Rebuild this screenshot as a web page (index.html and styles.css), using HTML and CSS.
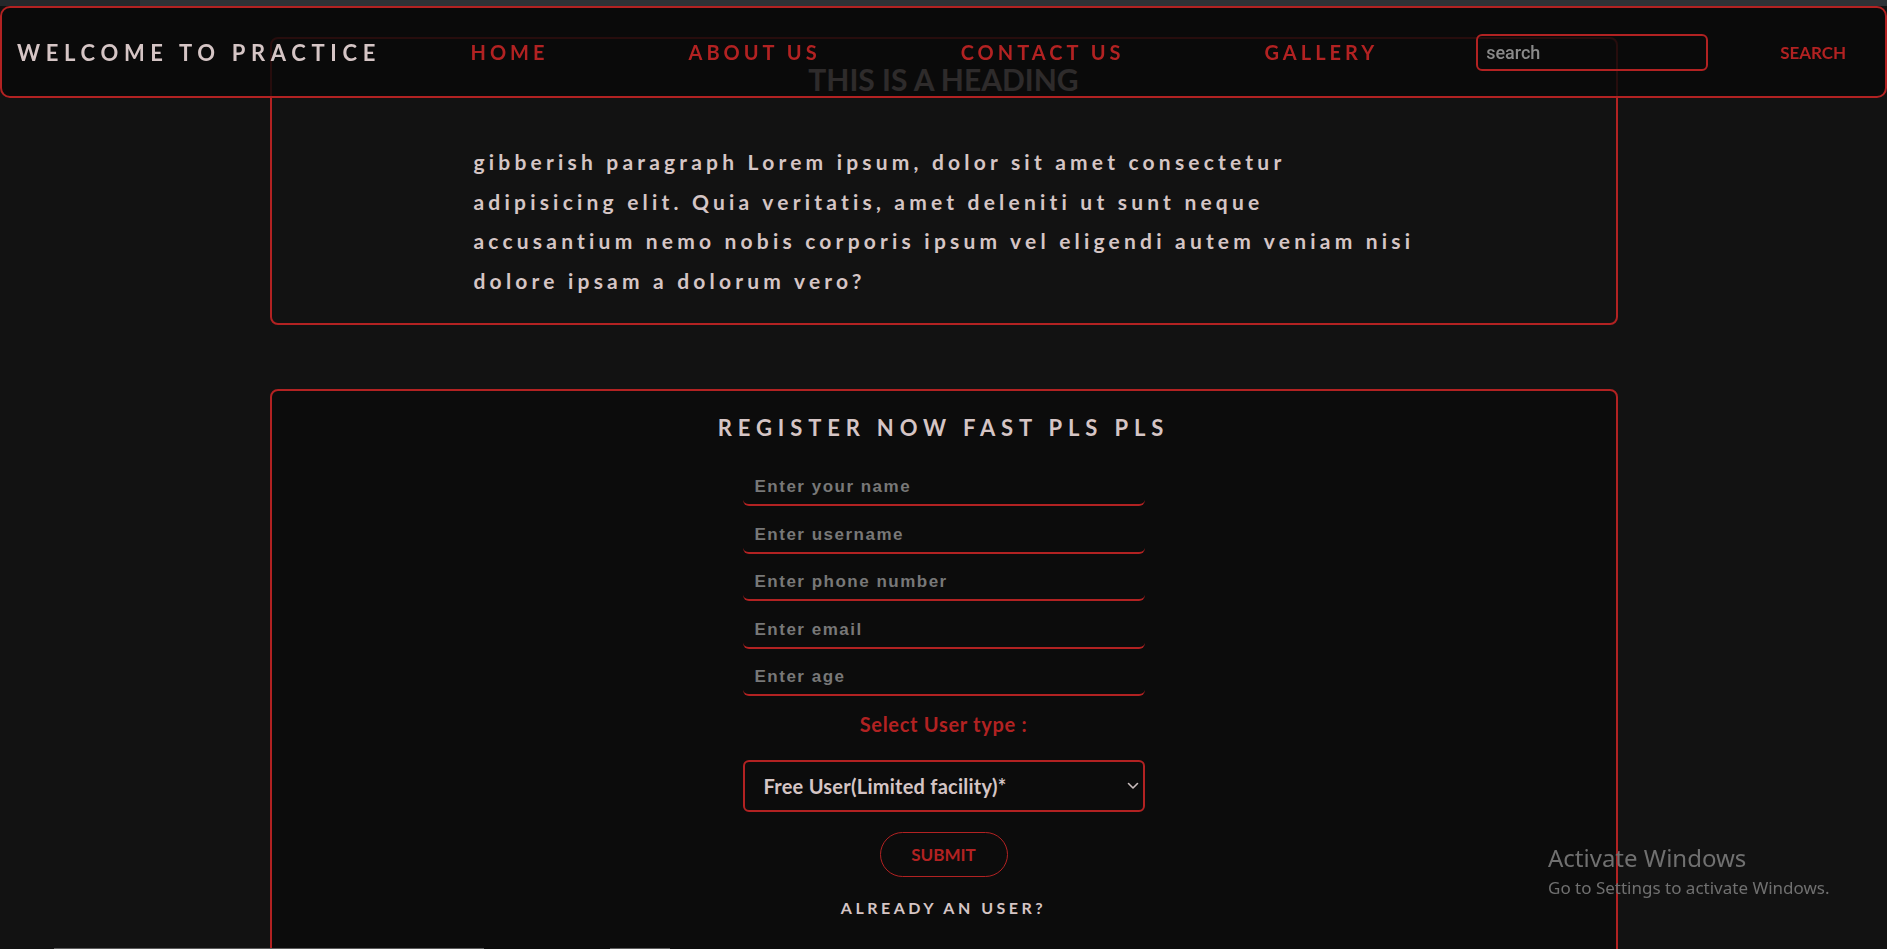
FILE: index.html
```html
<!DOCTYPE html>
<html lang="en">
<head>
<meta charset="utf-8">
<title>Welcome to practice</title>
<link rel="stylesheet" href="styles.css">
</head>
<body>
<div class="topstrip"><span class="topstrip-left"></span></div>

<header class="navbar">
  <h1 class="brand">WELCOME TO PRACTICE</h1>
  <nav>
    <ul class="links">
      <li><a href="#">HOME</a></li>
      <li><a href="#">ABOUT US</a></li>
      <li><a href="#">CONTACT US</a></li>
      <li><a href="#">GALLERY</a></li>
    </ul>
  </nav>
  <form class="search" onsubmit="return false">
    <input class="search-input" type="text" placeholder="search">
    <button class="search-btn" type="button">SEARCH</button>
  </form>
</header>

<main class="page">
  <section class="card intro">
    <h2 class="intro-title">THIS IS A HEADING</h2>
    <p class="intro-text">gibberish paragraph Lorem ipsum, dolor sit amet consectetur<br>adipisicing elit. Quia veritatis, amet deleniti ut sunt neque<br>accusantium nemo nobis corporis ipsum vel eligendi autem veniam nisi<br>dolore ipsam a dolorum vero?</p>
  </section>

  <section class="card register">
    <h2 class="register-title">REGISTER NOW FAST PLS PLS</h2>
    <form class="register-form" onsubmit="return false">
      <input class="field" type="text" placeholder="Enter your name">
      <input class="field" type="text" placeholder="Enter username">
      <input class="field" type="text" placeholder="Enter phone number">
      <input class="field" type="text" placeholder="Enter email">
      <input class="field" type="text" placeholder="Enter age">
      <label class="select-label">Select User type :</label>
      <div class="select-wrap">
        <select class="select">
          <option>Free User(Limited facility)*</option>
          <option>Premium User</option>
        </select>
        <svg class="chevron" width="12" height="8" viewBox="0 0 12 8"><path d="M1.5 1.5 L6 6 L10.5 1.5" fill="none" stroke="#c9bdbd" stroke-width="1.6" stroke-linecap="round" stroke-linejoin="round"/></svg>
      </div>
      <button class="submit" type="button">SUBMIT</button>
      <p class="already">ALREADY AN USER?</p>
    </form>
  </section>
</main>

<div class="watermark">
  <div class="wm-title">Activate Windows</div>
  <div class="wm-sub">Go to Settings to activate Windows.</div>
</div>

<div class="hscroll"><span class="thumb thumb-a"></span><span class="thumb thumb-b"></span></div>
</body>
</html>
```
FILE: styles.css
```css
* { box-sizing: border-box; }

body {
  margin: 0;
  background: #121212;
  font-family: Lato, "Open Sans", sans-serif;
  color: #d5c5c5;
}

.topstrip {
  height: 6px;
  background: #2e3236;
  display: flex;
}
.topstrip-left {
  width: 140px;
  background: #25282b;
}

/* ---------- navbar ---------- */
.navbar {
  position: fixed;
  top: 6px;
  left: 0;
  right: 0;
  height: 92px;
  border: 2px solid #b22222;
  border-radius: 10px;
  background: rgba(8, 8, 8, 0.82);
  display: flex;
  align-items: center;
  padding-left: 15px;
  z-index: 10;
}
.brand {
  margin: 0;
  font-size: 22px;
  font-weight: 700;
  letter-spacing: 5.65px;
  color: #d5c5c5;
  white-space: nowrap;
}
.links {
  list-style: none;
  margin: 0 0 0 89.6px;
  padding: 0;
  display: flex;
  gap: 140px;
}
.links a {
  color: #b22222;
  font-size: 20px;
  font-weight: 700;
  letter-spacing: 4px;
  text-decoration: none;
  white-space: nowrap;
}
.search {
  display: flex;
  align-items: center;
  margin-left: 98px;
}
.search-input {
  width: 232px;
  height: 37px;
  border: 2px solid #b22222;
  border-radius: 6px;
  background: transparent;
  padding: 0 8px;
  font-family: Roboto, "Liberation Sans", sans-serif;
  font-size: 18px;
  font-weight: 500;
  color: #cccccc;
  outline: none;
}
.search-input::placeholder { color: #8a8a8a; }
.search-btn {
  margin-left: 72px;
  background: none;
  border: 0;
  padding: 0;
  color: #b22222;
  font-family: Lato, "Open Sans", sans-serif;
  font-size: 17px;
  font-weight: 700;
}

/* ---------- page ---------- */
.page {
  padding-top: 31px;
}
.card {
  width: 1348px;
  margin: 0 auto;
  border: 2px solid #b22222;
  border-radius: 8px;
}

.intro {
  padding: 22px 0 22.5px;
}
.intro-title {
  margin: 0;
  text-align: center;
  font-size: 30px;
  line-height: 36px;
  font-weight: 700;
  color: #d5c5c5;
}
.intro-text {
  width: 940px;
  margin: 45px auto 0;
  font-size: 21px;
  line-height: 39.6px;
  font-weight: 700;
  letter-spacing: 4.2px;
  white-space: nowrap;
}

.register {
  margin-top: 64px;
  background: #0c0c0c;
  padding: 24px 0 80px;
  display: flex;
  flex-direction: column;
  align-items: center;
}
.register-title {
  margin: 0;
  font-size: 22px;
  line-height: 26.4px;
  font-weight: 700;
  letter-spacing: 5.85px;
  color: #d5c5c5;
}
.register-form {
  display: flex;
  flex-direction: column;
  align-items: center;
  margin-top: 24.8px;
}
.field {
  width: 402px;
  height: 40px;
  border: none;
  border-bottom: 2px solid #b22222;
  border-radius: 6px;
  background: transparent;
  padding: 4px 12px 0;
  font-family: "Liberation Sans", Arial, sans-serif;
  font-size: 17px;
  font-weight: 700;
  letter-spacing: 1.5px;
  color: #cccccc;
  outline: none;
}
.field + .field { margin-top: 7.5px; }
.field::placeholder { color: #787878; }

.select-label {
  margin-top: 16.4px;
  font-size: 20px;
  line-height: 24px;
  font-weight: 700;
  letter-spacing: 0.7px;
  color: #b22222;
}
.select-wrap {
  position: relative;
  margin-top: 23.4px;
  width: 402px;
  height: 52px;
}
.select {
  appearance: none;
  -webkit-appearance: none;
  width: 100%;
  height: 100%;
  border: 2px solid #b22222;
  border-radius: 6px;
  background: transparent;
  color: #d5c5c5;
  font-family: Lato, "Open Sans", sans-serif;
  font-size: 20px;
  font-weight: 700;
  letter-spacing: 0.25px;
  padding-left: 19px;
  outline: none;
}
.select option { background: #0c0c0c; }
.chevron {
  position: absolute;
  right: 6px;
  top: 22px;
  pointer-events: none;
}
.submit {
  margin-top: 20px;
  width: 128px;
  height: 45px;
  border: 1px solid #b22222;
  border-radius: 23px;
  background: transparent;
  color: #b22222;
  font-family: Lato, "Open Sans", sans-serif;
  font-size: 17px;
  font-weight: 700;
}
.already {
  margin: 21.6px 0 0;
  font-size: 16px;
  line-height: 19.2px;
  font-weight: 700;
  letter-spacing: 3.5px;
  color: #d5c5c5;
}

/* ---------- overlays ---------- */
.watermark {
  position: fixed;
  left: 1548px;
  top: 843px;
  font-family: "Noto Sans", "Open Sans", sans-serif;
  color: #707070;
  z-index: 20;
  pointer-events: none;
}
.wm-title {
  font-size: 24px;
  line-height: 30px;
}
.wm-sub {
  margin-top: 4px;
  font-size: 17px;
  line-height: 22px;
}
.hscroll {
  position: fixed;
  left: 0;
  right: 0;
  bottom: 0;
  height: 1px;
  display: flex;
  z-index: 20;
}
.thumb {
  height: 1px;
  background: #5c5c5c;
}
.thumb-a { margin-left: 54px; width: 430px; }
.thumb-b { margin-left: 126px; width: 60px; }
```
